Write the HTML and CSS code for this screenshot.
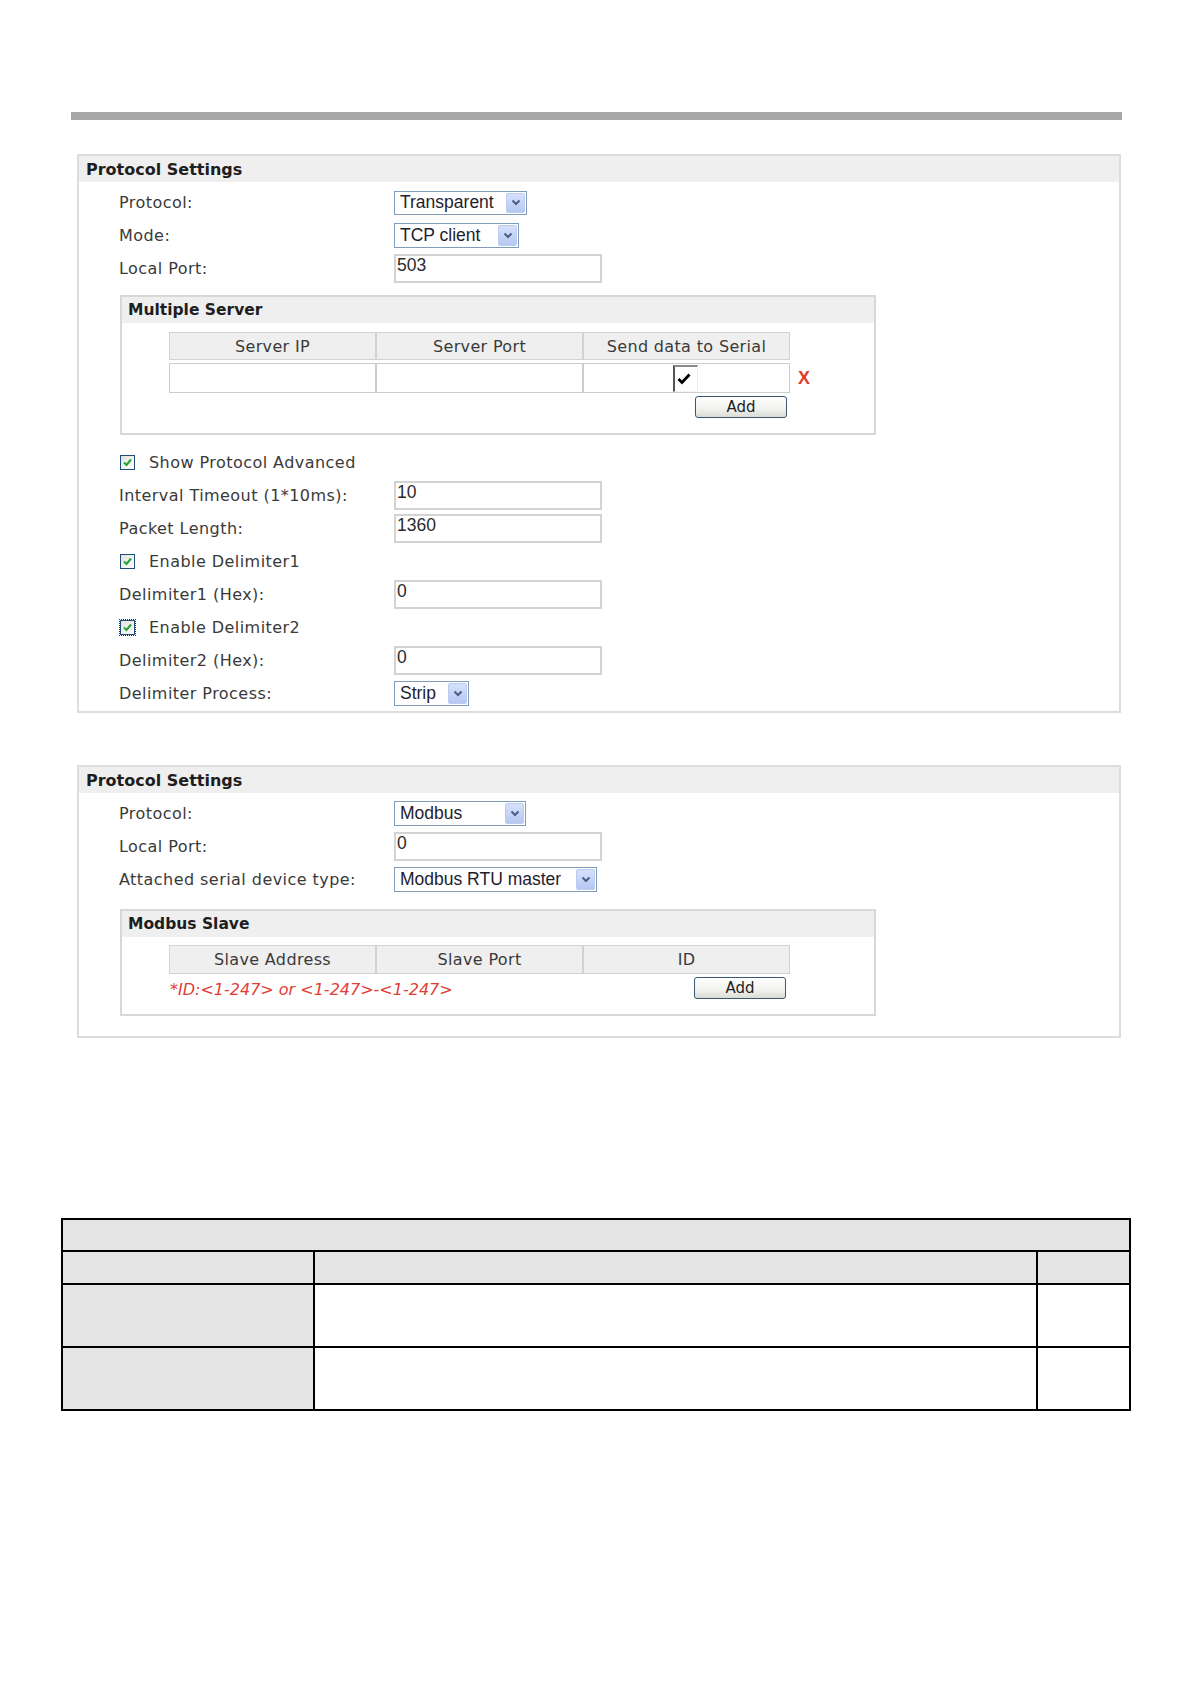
FILE: index.html
```html
<!DOCTYPE html>
<html lang="en">
<head>
<meta charset="utf-8">
<title>Protocol Settings</title>
<link rel="stylesheet" href="styles.css">
</head>
<body>
<div class="page">
  <div class="rule"></div>

  <section class="panel p1">
    <div class="panel-head">Protocol Settings</div>
    <div class="panel-body">
      <div class="row">
        <span class="label">Protocol:</span>
        <div class="select s-transparent"><span class="val">Transparent</span><span class="arrow"><svg width="10" height="7" viewBox="0 0 10 7"><path d="M1.5 1.5 L5 5 L8.5 1.5" fill="none" stroke="#4a5d86" stroke-width="2"/></svg></span></div>
      </div>
      <div class="row">
        <span class="label">Mode:</span>
        <div class="select s-tcp"><span class="val">TCP client</span><span class="arrow"><svg width="10" height="7" viewBox="0 0 10 7"><path d="M1.5 1.5 L5 5 L8.5 1.5" fill="none" stroke="#4a5d86" stroke-width="2"/></svg></span></div>
      </div>
      <div class="row">
        <span class="label">Local Port:</span>
        <input class="field" type="text" value="503">
      </div>

      <div class="subbox multi">
        <div class="subbox-head">Multiple Server</div>
        <div class="subbox-body">
          <div class="grid3 ghead">
            <div class="gcell">Server IP</div>
            <div class="gcell">Server Port</div>
            <div class="gcell">Send data to Serial</div>
          </div>
          <div class="inrow">
            <div class="grid3 ginput">
              <div class="icell"></div>
              <div class="icell"></div>
              <div class="icell center"><span class="bigcheck"><svg width="14" height="12" viewBox="0 0 14 12"><path d="M1.5 6 L5 9.5 L12.5 1.5" fill="none" stroke="#000" stroke-width="2.8"/></svg></span></div>
            </div>
            <span class="remove">X</span>
          </div>
          <div class="btnrow">
            <button class="btn" type="button">Add</button>
          </div>
        </div>
      </div>

      <div class="adv">
        <div class="row">
          <span class="check"><svg width="11" height="11" viewBox="0 0 11 11"><path d="M2 5.5 L4.5 8 L9 2.5" fill="none" stroke="#22a33a" stroke-width="2"/></svg></span>
          <span class="check-label">Show Protocol Advanced</span>
        </div>
        <div class="row">
          <span class="label">Interval Timeout (1*10ms):</span>
          <input class="field" type="text" value="10">
        </div>
        <div class="row">
          <span class="label">Packet Length:</span>
          <input class="field" type="text" value="1360">
        </div>
        <div class="row">
          <span class="check"><svg width="11" height="11" viewBox="0 0 11 11"><path d="M2 5.5 L4.5 8 L9 2.5" fill="none" stroke="#22a33a" stroke-width="2"/></svg></span>
          <span class="check-label">Enable Delimiter1</span>
        </div>
        <div class="row">
          <span class="label">Delimiter1 (Hex):</span>
          <input class="field" type="text" value="0">
        </div>
        <div class="row">
          <span class="check focus"><svg width="11" height="11" viewBox="0 0 11 11"><path d="M2 5.5 L4.5 8 L9 2.5" fill="none" stroke="#22a33a" stroke-width="2"/></svg></span>
          <span class="check-label">Enable Delimiter2</span>
        </div>
        <div class="row">
          <span class="label">Delimiter2 (Hex):</span>
          <input class="field" type="text" value="0">
        </div>
        <div class="row">
          <span class="label">Delimiter Process:</span>
          <div class="select s-strip"><span class="val">Strip</span><span class="arrow"><svg width="10" height="7" viewBox="0 0 10 7"><path d="M1.5 1.5 L5 5 L8.5 1.5" fill="none" stroke="#4a5d86" stroke-width="2"/></svg></span></div>
        </div>
      </div>
    </div>
  </section>

  <section class="panel p2">
    <div class="panel-head">Protocol Settings</div>
    <div class="panel-body">
      <div class="row">
        <span class="label">Protocol:</span>
        <div class="select s-modbus"><span class="val">Modbus</span><span class="arrow"><svg width="10" height="7" viewBox="0 0 10 7"><path d="M1.5 1.5 L5 5 L8.5 1.5" fill="none" stroke="#4a5d86" stroke-width="2"/></svg></span></div>
      </div>
      <div class="row">
        <span class="label">Local Port:</span>
        <input class="field" type="text" value="0">
      </div>
      <div class="row">
        <span class="label">Attached serial device type:</span>
        <div class="select s-rtu"><span class="val">Modbus RTU master</span><span class="arrow"><svg width="10" height="7" viewBox="0 0 10 7"><path d="M1.5 1.5 L5 5 L8.5 1.5" fill="none" stroke="#4a5d86" stroke-width="2"/></svg></span></div>
      </div>

      <div class="subbox slave">
        <div class="subbox-head">Modbus Slave</div>
        <div class="subbox-body">
          <div class="grid3 ghead">
            <div class="gcell">Slave Address</div>
            <div class="gcell">Slave Port</div>
            <div class="gcell">ID</div>
          </div>
          <div class="noterow">
            <span class="note">*ID:&lt;1-247&gt; or &lt;1-247&gt;-&lt;1-247&gt;</span>
            <button class="btn" type="button">Add</button>
          </div>
        </div>
      </div>
    </div>
  </section>

  <table class="blank">
    <colgroup>
      <col class="c1">
      <col class="c2">
      <col class="c3">
    </colgroup>
    <tr class="r1"><td class="gray" colspan="3"></td></tr>
    <tr class="r2"><td class="gray"></td><td class="gray"></td><td class="gray"></td></tr>
    <tr class="r3"><td class="gray"></td><td></td><td></td></tr>
    <tr class="r3"><td class="gray"></td><td></td><td></td></tr>
  </table>
</div>
</body>
</html>
```

FILE: styles.css
```css
* { box-sizing: border-box; }

body {
  margin: 0;
  background: #ffffff;
  font-family: "DejaVu Sans", Verdana, sans-serif;
  color: #363636;
}

.page {
  width: 1191px;
  padding-top: 112px;
  padding-bottom: 40px;
}

.rule {
  margin-left: 71px;
  width: 1051px;
  height: 8px;
  background: #a7a7a7;
}

/* ---------- panels ---------- */
.panel {
  margin-left: 77px;
  width: 1044px;
  border: 2px solid #dddddd;
}
.p1 { margin-top: 34px; padding-bottom: 1px; }
.p2 { margin-top: 52px; padding-bottom: 20px; }

.panel-head {
  height: 26px;
  background: #efefef;
  padding-left: 7px;
  font-weight: bold;
  font-size: 16px;
  line-height: 27px;
  color: #1e1e1e;
}

.panel-body {
  padding: 4px 0 0 40px;
}

.row {
  display: flex;
  align-items: center;
  height: 33px;
}

.label {
  width: 275px;
  flex: none;
  font-size: 16px;
  letter-spacing: 0.45px;
  color: #3a3a3a;
  white-space: nowrap;
}

/* ---------- selects ---------- */
.select {
  display: flex;
  align-items: center;
  justify-content: space-between;
  height: 24px;
  border: 1px solid #7f9db9;
  background: #fff;
  padding: 0 1px 0 5px;
  font-family: "Liberation Sans", Arial, sans-serif;
  font-size: 17.5px;
  color: #231d2e;
  white-space: nowrap;
}
.s-transparent { width: 133px; }
.s-tcp { width: 125px; height: 25px; }
.s-strip { width: 75px; height: 25px; }
.s-modbus { width: 132px; height: 25px; }
.s-rtu { width: 203px; height: 25px; }

.select .arrow {
  display: flex;
  align-items: center;
  justify-content: center;
  flex: none;
  width: 19px;
  height: calc(100% - 2px);
  background: linear-gradient(#d6e1fb, #b5c8f3);
  border: 1px solid #bccbef;
  border-radius: 2px;
}

/* ---------- inputs ---------- */
.field {
  width: 208px;
  height: 29px;
  margin: 0;
  border: 2px solid #d3d3d3;
  padding: 0 0 6px 1px;
  font-family: "Liberation Sans", Arial, sans-serif;
  font-size: 17.5px;
  color: #2a2a2a;
  background: #fff;
  outline: none;
}

/* ---------- sub boxes ---------- */
.subbox {
  margin-left: 1px;
  width: 756px;
  border: 2px solid #d8d8d8;
}
.multi { margin-top: 10px; }
.slave { margin-top: 13px; }

.subbox-head {
  height: 26px;
  background: #efefef;
  padding-left: 6px;
  font-weight: bold;
  font-size: 15.5px;
  line-height: 26px;
  color: #1e1e1e;
}

.subbox-body {
  padding: 9px 0 15px 47px;
}
.slave .subbox-body { padding-top: 8px; }

.grid3 {
  display: grid;
  grid-template-columns: 207px 207px 207px;
  width: 621px;
}

.ghead { height: 28px; }
.slave .ghead { height: 29px; }

.gcell {
  display: flex;
  align-items: center;
  justify-content: center;
  background: #efefef;
  border: 1px solid #d2d2d2;
  font-size: 16px;
  letter-spacing: 0.35px;
  color: #3a3a3a;
}

.inrow {
  display: flex;
  align-items: center;
  margin-top: 3px;
}

.ginput { height: 30px; }

.icell {
  background: #fff;
  border: 1px solid #cdcdcd;
}
.icell.center {
  display: flex;
  align-items: center;
  justify-content: center;
}

.bigcheck {
  display: flex;
  align-items: center;
  justify-content: flex-start;
  width: 25px;
  height: 27px;
  margin-left: -3px;
  border-left: 2px solid #555;
  border-top: 2px solid #8a8a8a;
  border-right: 1px solid #eeeeee;
  border-bottom: 1px solid #f3f3f3;
  padding-left: 2px;
  background: #fff;
}

.remove {
  margin-left: 8px;
  font-family: "Liberation Sans", Arial, sans-serif;
  font-weight: bold;
  font-size: 18px;
  color: #e33b2c;
}

.btnrow {
  display: flex;
  justify-content: flex-end;
  width: 618px;
  margin-top: 3px;
}

.btn {
  width: 92px;
  height: 22px;
  margin: 0;
  padding: 0;
  border: 1px solid #3b5776;
  border-radius: 3px;
  background: linear-gradient(#ffffff, #f1f1ee 60%, #dcdcd6);
  font-family: "DejaVu Sans", Verdana, sans-serif;
  font-size: 15px;
  line-height: 20px;
  color: #222;
}

.noterow {
  display: flex;
  align-items: center;
  justify-content: space-between;
  width: 617px;
  height: 22px;
  margin-top: 3px;
}

.note {
  padding-left: 1px;
  padding-top: 2px;
  font-style: italic;
  font-size: 16px;
  color: #e23c35;
  white-space: nowrap;
}

/* ---------- advanced rows ---------- */
.adv { margin-top: 11px; }

.check {
  display: flex;
  align-items: center;
  justify-content: center;
  width: 15px;
  height: 15px;
  margin-left: 1px;
  margin-right: 14px;
  border: 1px solid #1f4f7c;
  background: linear-gradient(135deg, #e2e2dc, #ffffff);
  flex: none;
}
.check.focus {
  outline: 1px dotted #333;
  outline-offset: 0;
}

.check-label {
  font-size: 16px;
  letter-spacing: 0.45px;
  color: #3a3a3a;
  white-space: nowrap;
}

/* ---------- bottom table ---------- */
.blank {
  margin: 180px 0 0 61px;
  width: 1068px;
  border-collapse: collapse;
  table-layout: fixed;
}
.blank .c1 { width: 252px; }
.blank .c2 { width: 723px; }
.blank .c3 { width: 93px; }
.blank td {
  border: 2px solid #000;
  padding: 0;
  background: #fff;
}
.blank td.gray { background: #e4e4e4; }
.blank .r1 { height: 32px; }
.blank .r2 { height: 33px; }
.blank .r3 { height: 63px; }
```
